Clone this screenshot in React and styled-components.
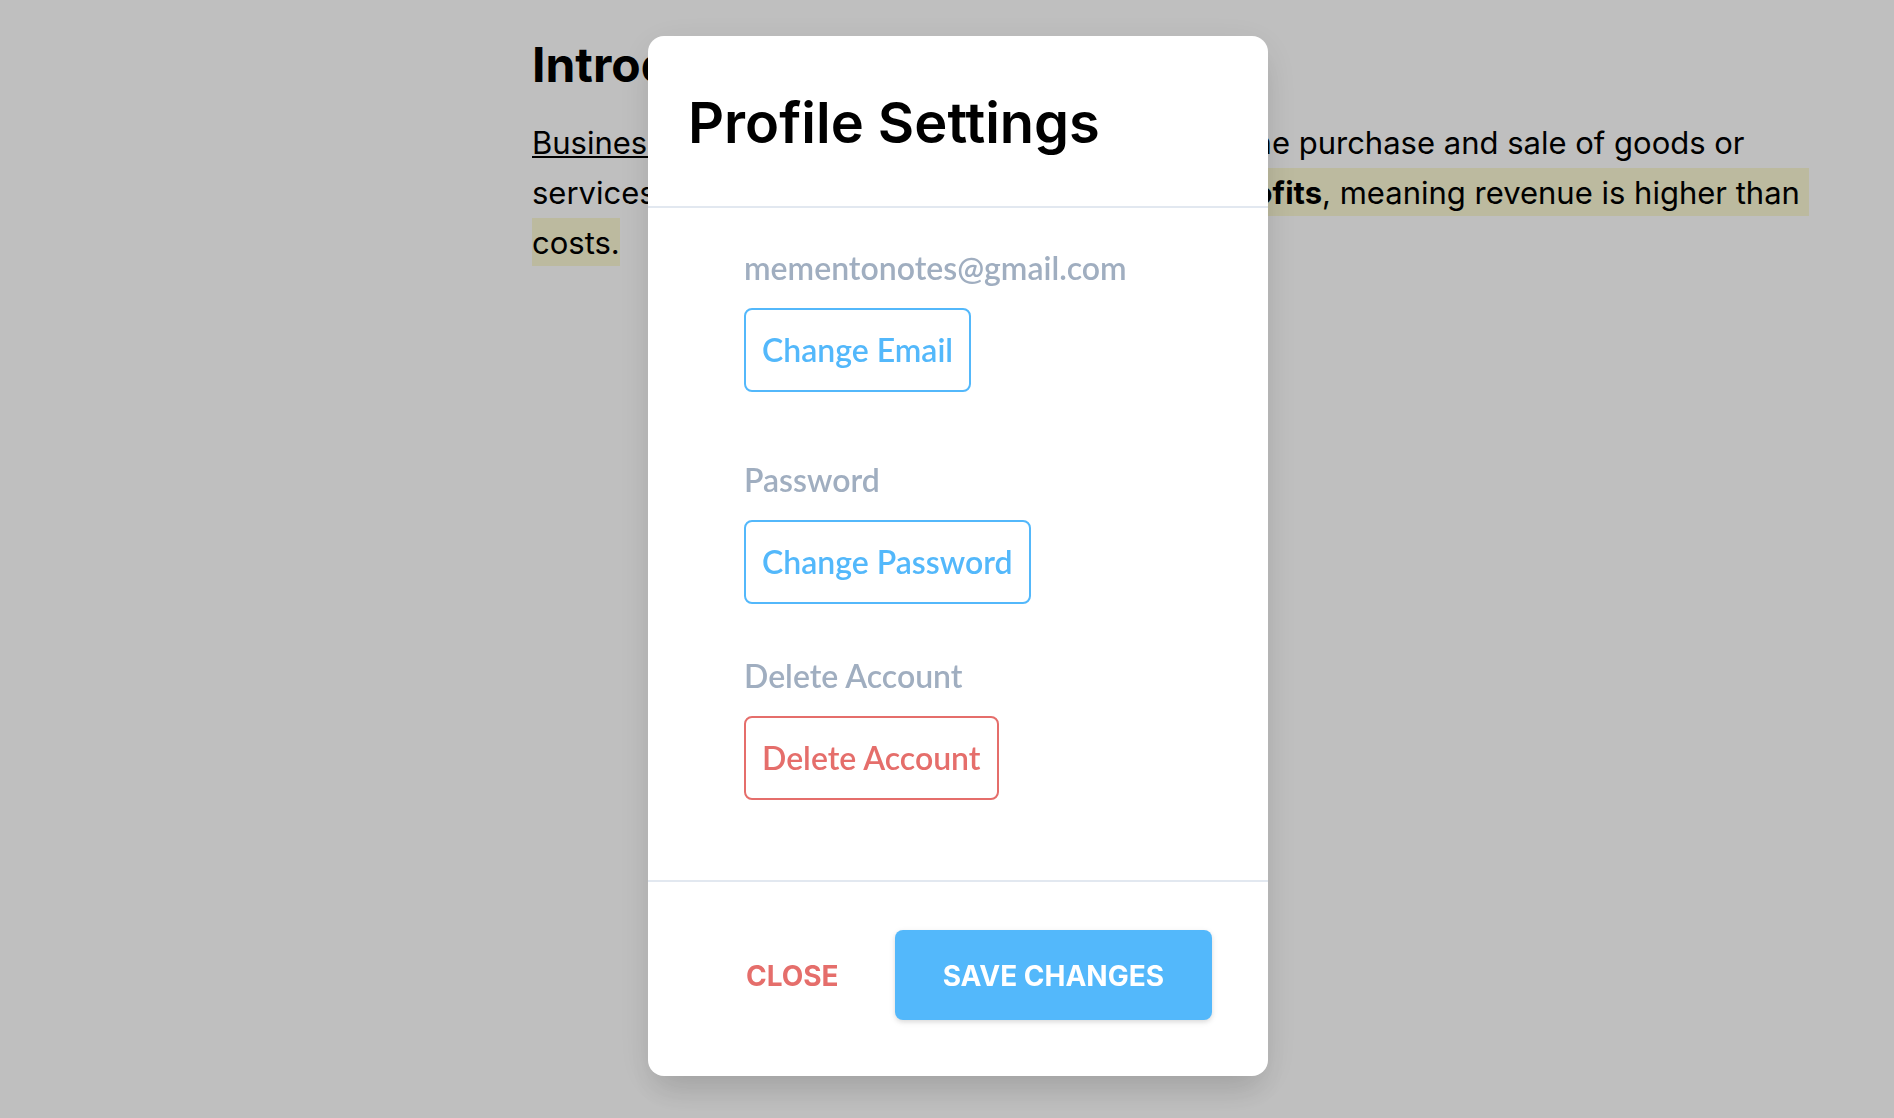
import React from "react";
import styled, { createGlobalStyle } from "styled-components";

const GlobalStyle = createGlobalStyle`
  *, *::before, *::after { box-sizing: border-box; }
  body {
    margin: 0;
    background: #fff;
    color: #000;
    font-family: Inter, "Liberation Sans", sans-serif;
  }
  h1, h2, p { margin: 0; }
  button { font: inherit; cursor: pointer; }
`;

const Article = styled.main`
  min-height: 100vh;
  padding: 35px 80px 36px 532px;
`;

const ArticleTitle = styled.h1`
  font-size: 48px;
  font-weight: 700;
  line-height: 60px;
  margin-bottom: 23px;
`;

const Paragraph = styled.p`
  font-size: 31px;
  line-height: 50px;
`;

const Term = styled.span`
  text-decoration: underline;
  text-decoration-thickness: 2px;
  text-underline-offset: 2px;
`;

const Highlight = styled.mark`
  padding: 6px 0 5px;
  background: #fbf8d4;
  color: inherit;
`;

const Overlay = styled.div`
  position: fixed;
  inset: 0;
  display: flex;
  justify-content: center;
  align-items: flex-start;
  padding: 36px 0 36px 22px;
  overflow: auto;
  background: rgba(0, 0, 0, 0.25);
`;

const Dialog = styled.section`
  width: 100%;
  max-width: 620px;
  border-radius: 16px;
  background: #fff;
  box-shadow: 0 20px 30px -6px rgba(0, 0, 0, 0.1), 0 8px 40px rgba(0, 0, 0, 0.08);
`;

const DialogHeader = styled.header`
  padding: 42px 40px 38px;
  border-bottom: 2px solid #e2e8f0;
`;

const DialogTitle = styled.h2`
  font-size: 56px;
  font-weight: 600;
  line-height: 90px;
`;

const DialogBody = styled.div`
  padding: 36px 96px 80px;
  font-family: Lato, "Liberation Sans", sans-serif;
  font-size: 32px;
  font-weight: 600;
  line-height: 48px;
`;

const Setting = styled.div`
  display: flex;
  flex-direction: column;
  align-items: flex-start;
  gap: 16px;
  margin-bottom: ${(p) => p.$space || 0}px;
`;

const SettingLabel = styled.p`
  color: #a0aec0;
`;

const OutlineButton = styled.button`
  padding: 16px;
  border: 2px solid currentColor;
  border-radius: 8px;
  background: transparent;
  color: ${(p) => (p.$danger ? "#e56e6b" : "#53b8fb")};
`;

const DialogFooter = styled.footer`
  display: flex;
  justify-content: flex-end;
  align-items: center;
  gap: 8px;
  padding: 48px 56px 56px 48px;
  border-top: 2px solid #e2e8f0;
`;

const FooterButton = styled.button`
  padding: 25px 48px 23px;
  border: 0;
  border-radius: 8px;
  background: transparent;
  color: #e56e6b;
  font-size: 28px;
  font-weight: 700;
  line-height: 42px;
  text-transform: uppercase;
  white-space: nowrap;
`;

const PrimaryButton = styled(FooterButton)`
  background: #53b8fb;
  color: #fff;
  box-shadow: 0 2px 6px rgba(0, 0, 0, 0.1), 0 2px 4px rgba(0, 0, 0, 0.06);
`;

export default function App() {
  return (
    <>
      <GlobalStyle />
      <Article>
        <ArticleTitle>Introduction</ArticleTitle>
        <Paragraph>
          <Term>Business</Term> refers to any organized activity behind the purchase and sale of goods or
          <br />
          services. The core aim of a business is to <Highlight>earn <b>profits</b>, meaning revenue is higher than&nbsp;<br />
          costs.</Highlight>
        </Paragraph>
      </Article>
      <Overlay>
        <Dialog role="dialog" aria-modal="true" aria-labelledby="profile-title">
          <DialogHeader>
            <DialogTitle id="profile-title">Profile Settings</DialogTitle>
          </DialogHeader>
          <DialogBody>
            <Setting $space={64}>
              <SettingLabel>mementonotes@gmail.com</SettingLabel>
              <OutlineButton type="button">Change Email</OutlineButton>
            </Setting>
            <Setting $space={48}>
              <SettingLabel>Password</SettingLabel>
              <OutlineButton type="button">Change Password</OutlineButton>
            </Setting>
            <Setting>
              <SettingLabel>Delete Account</SettingLabel>
              <OutlineButton type="button" $danger>Delete Account</OutlineButton>
            </Setting>
          </DialogBody>
          <DialogFooter>
            <FooterButton type="button">Close</FooterButton>
            <PrimaryButton type="button">Save Changes</PrimaryButton>
          </DialogFooter>
        </Dialog>
      </Overlay>
    </>
  );
}
